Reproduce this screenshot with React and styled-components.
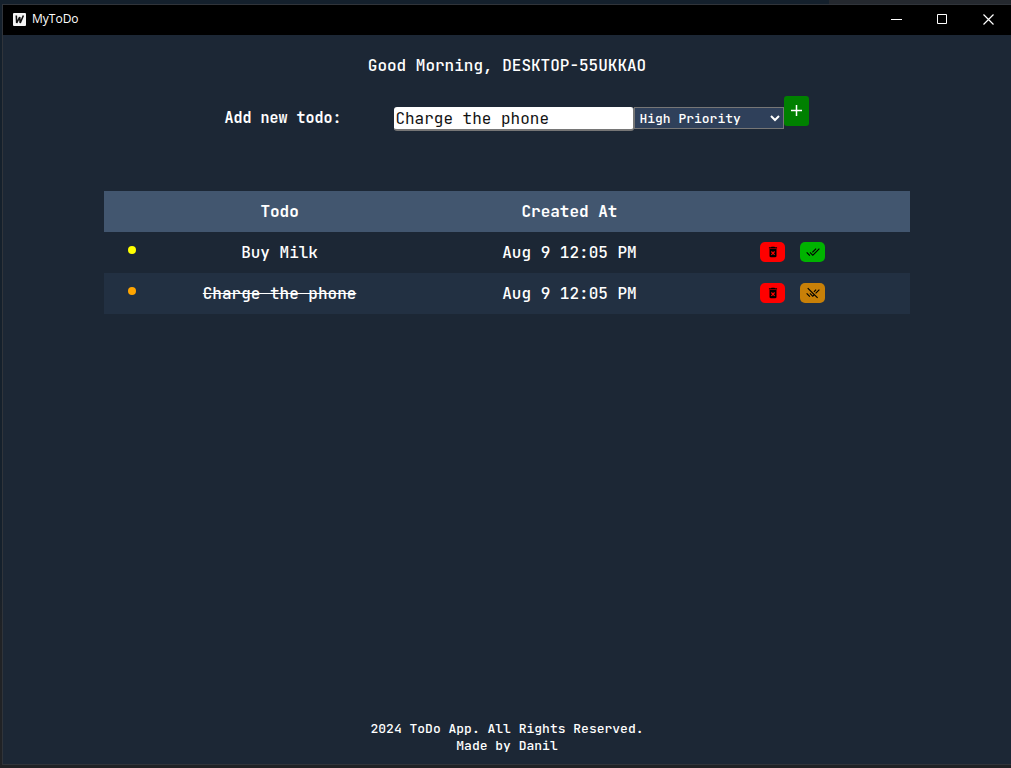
import React, { useState } from "react";
import styled, { createGlobalStyle } from "styled-components";
import { MdDeleteForever, MdDoneAll, MdRemoveDone } from "react-icons/md";

const mono = `"JetBrains Mono", "DejaVu Sans Mono", "Liberation Mono", monospace`;

const GlobalStyle = createGlobalStyle`
  *, *::before, *::after { box-sizing: border-box; }
  body { margin: 0; background: #17222d; color: #ffffff; font-family: ${mono}; font-size: 16px; font-weight: 500; }
  button, input, select { font-family: inherit; margin: 0; }
`;

const Desktop = styled.div`
  display: flex;
  min-height: 100vh;
  padding: 4px 0 3px 2px;
  background:
    linear-gradient(#24282e, #24282e) right top / 18% 4px no-repeat,
    linear-gradient(#202225, #202225) left bottom / 100% 3px no-repeat,
    linear-gradient(#14202c 0 75%, #202225 82%);
`;

const AppWindow = styled.div`
  flex: 1;
  display: flex;
  flex-direction: column;
  border: solid #30343a;
  border-width: 1px 0 1px 1px;
  background: #1c2735;
`;

const TitleBar = styled.header`
  display: flex;
  align-items: center;
  height: 30px;
  padding: 0 0 2px 10px;
  background: #000000;
  font: 12px/16px "Open Sans", "Noto Sans", sans-serif;
`;

const Logo = styled.svg`
  width: 13px;
  height: 13px;
  margin-right: 6px;
`;

const AppName = styled.span`
  flex: 1;
`;

const WindowButton = styled.button`
  display: grid;
  place-items: center;
  width: 46px;
  height: 28px;
  padding: 0;
  border: 0;
  background: transparent;
  color: #ffffff;
`;

const Main = styled.main`
  flex: 1;
  display: flex;
  flex-direction: column;
  align-items: center;
`;

const Greeting = styled.h1`
  margin: 20px 0 0;
  font-size: 16px;
  font-weight: 500;
  line-height: 21px;
`;

const TodoForm = styled.form`
  display: grid;
  grid-template-columns: 1fr 240px 150px 25px;
  align-items: start;
  width: 60%;
  margin-top: 20px;
`;

const FormLabel = styled.label`
  padding: 12px 0 0 20px;
  font-size: 15px;
  font-weight: 700;
  line-height: 20px;
  white-space: nowrap;
`;

const TodoInput = styled.input`
  width: 100%;
  height: 24px;
  margin-top: 11px;
  padding: 0 1px;
  border: 0;
  border-right: 1px solid #767676;
  border-bottom: 2px solid #767676;
  border-radius: 3px;
  background: #ffffff;
  color: #111111;
  font-size: 16px;
  outline: 0;
`;

const SelectBox = styled.div`
  display: grid;
  align-items: center;
  margin-top: 11px;
`;

const PrioritySelect = styled.select`
  grid-area: 1 / 1;
  width: 100%;
  height: 22px;
  padding: 0 4px;
  appearance: none;
  border: 1px solid #767676;
  border-radius: 0;
  background: #2f405a;
  color: #ffffff;
  font-size: 13px;
  font-weight: 500;
`;

const Chevron = styled.svg`
  grid-area: 1 / 1;
  justify-self: end;
  width: 10px;
  height: 7px;
  margin-right: 4px;
  pointer-events: none;
`;

const AddButton = styled.button`
  display: grid;
  place-items: center;
  height: 30px;
  padding: 0 0 2px;
  border: 0;
  border-radius: 3px;
  background: #008000;
  color: #ffffff;
`;

const TodoTable = styled.table`
  width: 80%;
  margin-top: 60px;
  border-collapse: collapse;
  table-layout: fixed;
  text-align: center;
`;

const HeadRow = styled.tr`
  height: 41px;
  background: #42566f;
`;

const HeadCell = styled.th`
  width: ${(p) => p.$width};
  padding: 0;
`;

const TodoRow = styled.tr`
  height: 41px;
  &:nth-child(even) { background: #223042; }
`;

const Cell = styled.td`
  padding: 0;
  text-decoration: ${(p) => (p.$done ? "line-through" : "none")};
`;

const PriorityDot = styled.span`
  display: block;
  width: 8px;
  height: 8px;
  margin: 0 auto 5px;
  border-radius: 50%;
  background: ${(p) => p.$color};
`;

const Actions = styled.div`
  display: flex;
  gap: 15px;
  padding: 0 0 1px 20px;
`;

const ActionButton = styled.button`
  display: grid;
  place-items: center;
  width: 25px;
  height: 20px;
  padding: 0;
  border: 0;
  border-radius: 5px;
  background: ${(p) => p.$color};
  color: #000000;
  font-size: 14px;
`;

const Footer = styled.footer`
  padding-bottom: 10px;
  font-size: 13px;
  line-height: 17px;
  text-align: center;
`;

const FooterLine = styled.div``;

const initialTodos = [
  { title: "Buy Milk", created: "Aug 9 12:05 PM", dot: "#ffff00", done: false },
  { title: "Charge the phone", created: "Aug 9 12:05 PM", dot: "#ffa500", done: true },
];

export default function App() {
  const [text, setText] = useState("Charge the phone");
  return (
    <>
      <GlobalStyle />
      <Desktop>
        <AppWindow>
          <TitleBar>
            <Logo viewBox="0 0 13 13" aria-hidden="true">
              <rect width="13" height="13" rx="1" fill="#f4f4f4" />
              <path d="M3.3 2.5 3.7 10 6.7 4 7.2 10 10.4 2.5" fill="none" stroke="#111" strokeWidth="1.6" strokeLinejoin="bevel" />
            </Logo>
            <AppName>MyToDo</AppName>
            <WindowButton aria-label="Minimize">
              <svg width="11" height="11" viewBox="0 0 11 11"><path d="M0 5.5h11" stroke="currentColor" /></svg>
            </WindowButton>
            <WindowButton aria-label="Maximize">
              <svg width="10" height="10" viewBox="0 0 10 10"><path d="M.5.5h9v9h-9z" fill="none" stroke="currentColor" /></svg>
            </WindowButton>
            <WindowButton aria-label="Close">
              <svg width="11" height="11" viewBox="0 0 11 11"><path d="m.5.5 10 10m0-10-10 10" stroke="currentColor" strokeWidth="1.2" /></svg>
            </WindowButton>
          </TitleBar>
          <Main>
            <Greeting>Good Morning, DESKTOP-55UKKAO</Greeting>
            <TodoForm onSubmit={(e) => e.preventDefault()}>
              <FormLabel htmlFor="todo">Add new todo:</FormLabel>
              <TodoInput id="todo" value={text} onChange={(e) => setText(e.target.value)} />
              <SelectBox>
                <PrioritySelect aria-label="Priority" defaultValue="High Priority">
                  <option>High Priority</option>
                  <option>Medium Priority</option>
                  <option>Low Priority</option>
                </PrioritySelect>
                <Chevron viewBox="0 0 10 7" aria-hidden="true">
                  <path d="m1 1 4 4 4-4" fill="none" stroke="#fff" strokeWidth="2" />
                </Chevron>
              </SelectBox>
              <AddButton aria-label="Add todo">
                <svg width="11" height="11" viewBox="0 0 11 11"><path d="M5.5 0v11M0 5.5h11" stroke="currentColor" strokeWidth="1.5" /></svg>
              </AddButton>
            </TodoForm>
            <TodoTable>
              <thead>
                <HeadRow>
                  <HeadCell $width="7%" />
                  <HeadCell $width="29.6%">Todo</HeadCell>
                  <HeadCell $width="42.3%">Created At</HeadCell>
                  <HeadCell $width="21.1%" />
                </HeadRow>
              </thead>
              <tbody>
                {initialTodos.map((todo) => (
                  <TodoRow key={todo.title}>
                    <Cell><PriorityDot $color={todo.dot} /></Cell>
                    <Cell $done={todo.done}>{todo.title}</Cell>
                    <Cell>{todo.created}</Cell>
                    <Cell>
                      <Actions>
                        <ActionButton $color="#ff0000" aria-label="Delete"><MdDeleteForever /></ActionButton>
                        <ActionButton
                          $color={todo.done ? "#c88008" : "#00b300"}
                          aria-label={todo.done ? "Mark as not done" : "Mark as done"}
                        >
                          {todo.done ? <MdRemoveDone /> : <MdDoneAll />}
                        </ActionButton>
                      </Actions>
                    </Cell>
                  </TodoRow>
                ))}
              </tbody>
            </TodoTable>
          </Main>
          <Footer>
            <FooterLine>2024 ToDo App. All Rights Reserved.</FooterLine>
            <FooterLine>Made by Danil</FooterLine>
          </Footer>
        </AppWindow>
      </Desktop>
    </>
  );
}
